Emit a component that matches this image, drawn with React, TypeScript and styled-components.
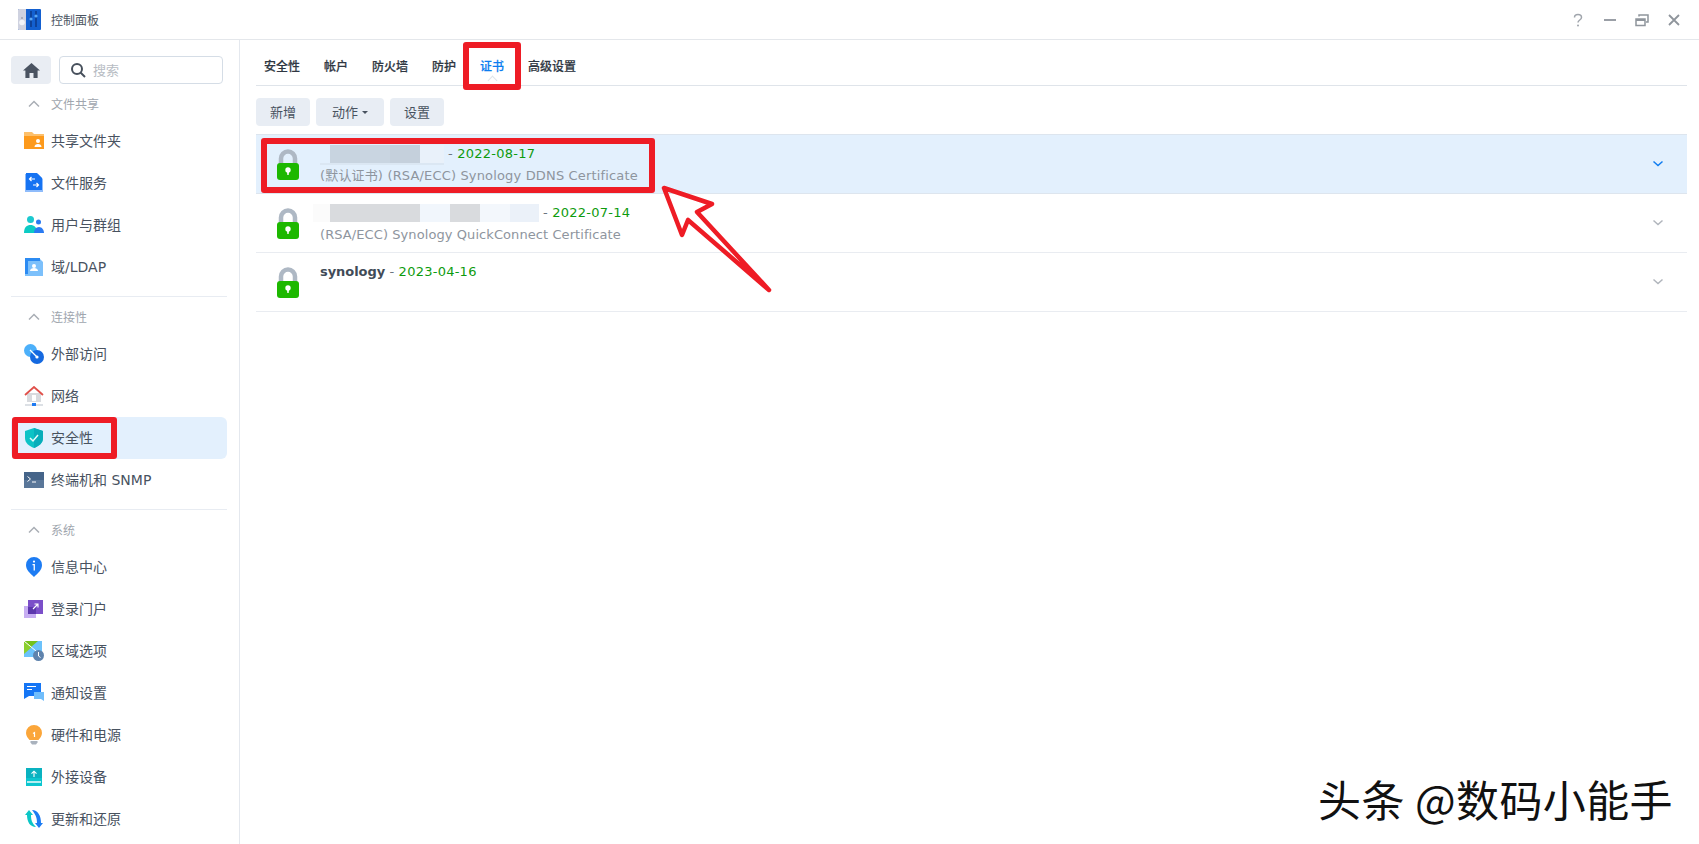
import React from "react";
import styled, { createGlobalStyle } from "styled-components";

const FONT = `"DejaVu Sans", "Noto Sans CJK SC", sans-serif`;

const Global = createGlobalStyle`
  html, body { margin: 0; padding: 0; background: #fff; }
  body { font-family: ${FONT}; overflow: hidden; }
  * { box-sizing: border-box; }
`;

const Window = styled.div`
  position: relative;
  width: 1699px;
  height: 844px;
  display: flex;
  flex-direction: column;
  overflow: hidden;
  background: #fff;
`;
const TitleBar = styled.header`
  height: 40px;
  flex: none;
  display: flex;
  align-items: center;
  padding: 0 17px 0 17px;
  border-bottom: 1px solid #e4e7eb;
`;
const AppTitle = styled.span`
  margin-left: 10px;
  font-size: 12px;
  color: #4a5461;
`;
const WinControls = styled.div`
  margin-left: auto;
  display: flex;
  align-items: center;
  gap: 16px;
`;
const WinButton = styled.svg`
  width: 16px;
  height: 16px;
  display: block;
`;
const Body = styled.div`
  flex: 1;
  display: flex;
  min-height: 0;
`;
const Sidebar = styled.nav`
  width: 240px;
  flex: none;
  padding: 16px 12px 0 11px;
  border-right: 1px solid #e4e8ee;
`;
const SearchRow = styled.div`
  display: flex;
  gap: 8px;
  height: 28px;
`;
const HomeButton = styled.button`
  width: 40px;
  height: 28px;
  padding: 0;
  border: 0;
  border-radius: 4px;
  background: #e9edf3;
  display: flex;
  align-items: center;
  justify-content: center;
`;
const SearchBox = styled.div`
  width: 164px;
  height: 28px;
  border: 1px solid #d5dde6;
  border-radius: 4px;
  display: flex;
  align-items: center;
  gap: 7px;
  padding: 0 0 1px 10px;
  font-size: 13px;
  color: #b7bcc3;
`;
const SectionHeader = styled.div`
  height: 33px;
  padding-left: 17px;
  display: flex;
  align-items: center;
  gap: 11px;
  font-size: 12px;
  color: #a0a6ae;
  margin-top: 3px;
`;
const Divider = styled.hr`
  height: 1px;
  border: 0;
  margin: 8px 0 0;
  background: #e8ecf2;
`;
const NavItem = styled.div<{ $active?: boolean }>`
  height: 42px;
  display: flex;
  align-items: center;
  gap: 7px;
  padding-left: 13px;
  font-size: 14px;
  color: #48525f;
  border-radius: 6px;
  background: ${(p) => (p.$active ? "#e3f0fd" : "transparent")};
`;
const NavLabel = styled.span`
  padding-bottom: 3px;
`;
const NavIcon = styled.svg`
  width: 20px;
  height: 20px;
  flex: none;
  display: block;
`;
const Main = styled.main`
  flex: 1;
  min-width: 0;
  padding: 0 12px 0 16px;
`;
const Tabs = styled.div`
  height: 46px;
  display: flex;
  align-items: center;
  gap: 24px;
  padding: 5px 0 0 8px;
  border-bottom: 1px solid #dfe4ea;
`;
const Tab = styled.div<{ $active?: boolean }>`
  position: relative;
  font-size: 12px;
  font-weight: 500;
  color: ${(p) => (p.$active ? "#0b7df0" : "#2f3742")};
  -webkit-text-stroke: 0.2px currentColor;
`;
const TabCaret = styled.i`
  position: absolute;
  left: 50%;
  top: 20px;
  width: 7px;
  height: 7px;
  margin-left: -3.5px;
  background: #fff;
  border-left: 1px solid #dfe4ea;
  border-top: 1px solid #dfe4ea;
  transform: rotate(45deg);
`;
const Toolbar = styled.div`
  display: flex;
  gap: 6px;
  padding-top: 12px;
  height: 48px;
`;
const ToolButton = styled.button<{ $w: number }>`
  width: ${(p) => p.$w}px;
  height: 28px;
  border: 0;
  border-radius: 4px;
  background: #e8edf4;
  color: #48525f;
  font-family: ${FONT};
  font-size: 13px;
  padding: 0 0 2px;
  display: flex;
  align-items: center;
  justify-content: center;
  gap: 4px;
`;
const CaretDown = styled.i`
  width: 0;
  height: 0;
  margin-top: 2px;
  border-left: 3px solid transparent;
  border-right: 3px solid transparent;
  border-top: 3px solid #48525f;
`;
const List = styled.div`
  border-top: 1px solid #dde5ee;
`;
const Row = styled.div<{ $active?: boolean }>`
  height: 59px;
  display: flex;
  align-items: flex-start;
  padding: 14px 0 0 20px;
  background: ${(p) => (p.$active ? "#e3f0fd" : "#fff")};
  border-bottom: 1px solid ${(p) => (p.$active ? "#dde5ee" : "#e9ecf1")};
`;
const LockIcon = styled.svg`
  width: 24px;
  height: 31px;
  flex: none;
  display: block;
`;
const RowText = styled.div`
  margin-left: 20px;
  margin-top: -5px;
  flex: 1;
  min-width: 0;
`;
const NameLine = styled.div`
  display: flex;
  align-items: center;
  height: 19px;
  font-size: 13px;
  letter-spacing: 0.16px;
  color: #6c7580;
  white-space: pre;
`;
const CertName = styled.span`
  font-weight: 700;
  letter-spacing: -0.05px;
  color: #414b57;
`;
const CertDate = styled.span`
  letter-spacing: 0.25px;
  color: #0e9b0e;
`;
const SubLine = styled.div<{ $tracking: number }>`
  margin-top: 3px;
  font-size: 13px;
  line-height: 19px;
  letter-spacing: ${(p) => p.$tracking}px;
  color: #8e959e;
`;
const Mosaic = styled.div<{ $shift: number }>`
  position: relative;
  display: flex;
  height: 18px;
  margin: 0 4px 0 ${(p) => p.$shift}px;
`;
const MosaicBlock = styled.i<{ $w: number; $c: string }>`
  display: block;
  width: ${(p) => p.$w}px;
  height: 100%;
  background: ${(p) => p.$c};
`;
const MosaicStrip = styled.i`
  position: absolute;
  left: -10px;
  right: 0;
  top: 18px;
  height: 2px;
  background: #dbe7f3;
`;
const Chevron = styled.svg`
  width: 12px;
  height: 8px;
  flex: none;
  margin: 11px 23px 0 0;
`;
const RedBox = styled.div<{ $l: number; $t: number; $w: number; $h: number }>`
  position: absolute;
  left: ${(p) => p.$l}px;
  top: ${(p) => p.$t}px;
  width: ${(p) => p.$w}px;
  height: ${(p) => p.$h}px;
  border: 6px solid #ee1c25;
  border-radius: 3px;
  pointer-events: none;
`;
const Arrow = styled.svg`
  position: absolute;
  left: 650px;
  top: 175px;
  width: 130px;
  height: 125px;
  pointer-events: none;
`;
const Watermark = styled.div`
  position: absolute;
  right: 26px;
  top: 769px;
  font-family: "Noto Sans CJK SC", sans-serif;
  font-size: 43px;
  line-height: 58px;
  color: #111;
  white-space: pre;
  letter-spacing: 0.4px;
`;

const Folder = () => (
  <NavIcon viewBox="0 0 20 20">
    <path d="M0 1h8l2 2h10v3H0z" fill="#fdc06b" />
    <path d="M0 5h20v13H0z" fill="#fd9a1c" />
    <circle cx="14" cy="10" r="2" fill="#fff" />
    <path d="M10.500 16c0-2 1.500-3 3.500-3s3.500 1 3.500 3z" fill="#fff" />
  </NavIcon>
);
const FileSvc = () => (
  <NavIcon viewBox="0 0 20 20">
    <path d="M1 1h13l5 5v13H1z" fill="#8fbcfb" />
    <path d="M2 0h11l5 5v12H2z" fill="#1673f2" />
    <path d="M11 6H5.500m2-2-2 2 2 2M9 12h5.500m-2-2 2 2-2 2" stroke="#fff" strokeWidth="1.200" fill="none" />
  </NavIcon>
);
const Users = () => (
  <NavIcon viewBox="0 0 20 20">
    <circle cx="6.500" cy="4.500" r="3.500" fill="#1cc9cf" />
    <path d="M0 18c0-6 3-8 6.500-8S13 12 13 18z" fill="#0ccbc4" />
    <circle cx="14.500" cy="7" r="2.500" fill="#2a7bf2" />
    <path d="M10 18c0-3 2-6 5-6s5 3 5 6z" fill="#2a7bf2" />
  </NavIcon>
);
const Ldap = () => (
  <NavIcon viewBox="0 0 20 20">
    <path d="M1 1h14l4 4v14H1z" fill="#7cc0fb" />
    <path d="M1 1h15v3H4v13H1z" fill="#2c8bf2" />
    <circle cx="10" cy="9" r="2" fill="#fff" />
    <path d="M6 14c0-2 2-3 4-3s4 1 4 3z" fill="#fff" />
  </NavIcon>
);
const External = () => (
  <NavIcon viewBox="0 0 20 20">
    <circle cx="6.500" cy="6.500" r="6.500" fill="#4cb0fa" />
    <circle cx="13" cy="13" r="7" fill="#1569e0" />
    <path d="M6 6l7 7" stroke="#fff" strokeWidth="1.200" />
    <circle cx="13" cy="13" r="1.600" fill="#fff" />
  </NavIcon>
);
const Network = () => (
  <NavIcon viewBox="0 0 20 20">
    <path d="M3 7h14v9H3z" fill="#d8dade" />
    <path d="M8 9h4v6H8z" fill="#fff" />
    <path d="M1 9l9-8 9 8" fill="none" stroke="#e0504a" strokeWidth="1.800" />
    <path d="M1 19h18" stroke="#c5ccd4" strokeWidth="1.200" />
    <path d="M8 17h4v3H8z" fill="#1e7af2" />
  </NavIcon>
);
const Shield = () => (
  <NavIcon viewBox="0 0 20 20">
    <path d="M10 0l9 3v7c0 5-4 8-9 10-5-2-9-5-9-10V3z" fill="#0cc3c6" />
    <path d="M10 0l9 3v7c0 5-4 8-9 10z" fill="#08adba" />
    <path d="M6 10l3 3 5-6" stroke="#e8fbfb" strokeWidth="1.500" fill="none" />
  </NavIcon>
);
const Terminal = () => (
  <NavIcon viewBox="0 0 20 20">
    <path d="M0 2h20v16H0z" fill="#5a7799" />
    <path d="M0 2h20v8H0z" fill="#456489" />
    <path d="M3.500 6.500l3 2.500-3 2.500M8 12h4" stroke="#fff" strokeWidth="1" fill="none" />
  </NavIcon>
);
const Info = () => (
  <NavIcon viewBox="0 0 20 20">
    <path d="M10 0a8 8 0 0 1 8 8c0 5-4 8-8 12-4-4-8-7-8-12a8 8 0 0 1 8-8z" fill="#1d7cf3" />
    <circle cx="10" cy="4.600" r="1.100" fill="#fff" />
    <path d="M8.500 7h2.400v6.500H9.600V8.200H8.500z" fill="#fff" />
  </NavIcon>
);
const Portal = () => (
  <NavIcon viewBox="0 0 20 20">
    <path d="M0 7h12v12H0z" fill="#c7aef2" />
    <path d="M4 1h15v14H4z" fill="#7b4fc9" />
    <path d="M4 8h8v7H4z" fill="#5c37ad" />
    <path d="M9 10l5-5m-3.500 0H14v3.500" stroke="#fff" strokeWidth="1.100" fill="none" />
  </NavIcon>
);
const Region = () => (
  <NavIcon viewBox="0 0 20 20">
    <path d="M0 0h18v16H0z" fill="#6cc2fb" />
    <path d="M0 0h14L7 6z" fill="#76c11a" />
    <path d="M0 0v13l8-7z" fill="#8bcf2e" />
    <path d="M0 0l18 15" stroke="#fff" strokeWidth="1" />
    <circle cx="14.500" cy="14.500" r="5.500" fill="#5f83ad" />
    <path d="M14.500 11v4l2 1.500" stroke="#fff" strokeWidth="1" fill="none" />
  </NavIcon>
);
const Notify = () => (
  <NavIcon viewBox="0 0 20 20">
    <path d="M0 0h17v13H5l-5 3z" fill="#1576f5" />
    <path d="M3 3.500h9M3 6.500h5" stroke="#fff" strokeWidth="1" />
    <path d="M10 9h10v9l-3-2h-7z" fill="#70bdfb" />
  </NavIcon>
);
const Bulb = () => (
  <NavIcon viewBox="0 0 20 20">
    <path d="M10 0a8 8 0 0 1 8 8c0 3-2 5-3.500 7h-9C4 13 2 11 2 8a8 8 0 0 1 8-8z" fill="#fba63a" />
    <path d="M6.500 16h7v1.500l-1.500 2h-4l-1.500-2z" fill="#a9b2bd" />
    <path d="M9 8.500l1.500-1v4.500" stroke="#fff" strokeWidth="1.200" fill="none" />
  </NavIcon>
);
const Usb = () => (
  <NavIcon viewBox="0 0 20 20">
    <path d="M2 1h16v18H2z" fill="#0cc6cf" />
    <path d="M2 1h16v10H2z" fill="#0ab2c0" />
    <path d="M10 10V4.500m-2.500 2.200L10 4.200l2.500 2.500" stroke="#fff" strokeWidth="1.100" fill="none" />
    <path d="M3 15h14" stroke="#fff" strokeWidth="1.400" />
  </NavIcon>
);
const Update = () => (
  <NavIcon viewBox="0 0 20 20">
    <path d="M3 6H1l4-5 4 5H7c0 5 1 8 5 12-6 0-9-5-9-12z" fill="#0cc6c6" />
    <path d="M17 14h2l-4 5-4-5h2c0-5-1-8-5-13 6 0 9 6 9 13z" fill="#1d7cf3" />
  </NavIcon>
);

const Lock = () => (
  <LockIcon viewBox="0 0 24 31">
    <path d="M5 15V9.500a7 7 0 0 1 14 0V15" fill="none" stroke="#aeb8c4" strokeWidth="4.500" />
    <rect x="1" y="14" width="22" height="17" rx="3" fill="#1db800" />
    <circle cx="12" cy="21" r="2.700" fill="#fff" />
    <path d="M11 22h2l-.3 4h-1.400z" fill="#fff" />
  </LockIcon>
);

const sections: { title: string; items: [string, React.FC][]; divider?: boolean }[] = [
  {
    title: "文件共享",
    items: [
      ["共享文件夹", Folder],
      ["文件服务", FileSvc],
      ["用户与群组", Users],
      ["域/LDAP", Ldap],
    ],
  },
  {
    title: "连接性",
    divider: true,
    items: [
      ["外部访问", External],
      ["网络", Network],
      ["安全性", Shield],
      ["终端机和 SNMP", Terminal],
    ],
  },
  {
    title: "系统",
    divider: true,
    items: [
      ["信息中心", Info],
      ["登录门户", Portal],
      ["区域选项", Region],
      ["通知设置", Notify],
      ["硬件和电源", Bulb],
      ["外接设备", Usb],
      ["更新和还原", Update],
    ],
  },
];

const tabs = ["安全性", "帐户", "防火墙", "防护", "证书", "高级设置"];

const row1: [number, string][] = [
  [30, "#c8d4e0"],
  [30, "#c9d5e1"],
  [30, "#c5d0dc"],
  [24, "#e9f1fa"],
];
const row2: [number, string][] = [
  [17, "#fbfbfb"],
  [90, "#d9dbde"],
  [30, "#f1f6fc"],
  [30, "#d9dbde"],
  [30, "#f3f7fc"],
  [29, "#ebf1f9"],
];

const Chev = ({ active }: { active?: boolean }) => (
  <Chevron viewBox="0 0 12 8">
    <path d="M1.500 1.500L6 5.500l4.500-4" fill="none" stroke={active ? "#0f7cf0" : "#b0b5bc"} strokeWidth="1.500" />
  </Chevron>
);

export default function App() {
  return (
    <Window>
      <Global />
      <TitleBar>
        <svg width="24" height="24" viewBox="0 0 24 24">
          <rect x="1" y="1" width="23" height="21" rx="1" fill="#1360d0" />
          <path d="M1 2a1 1 0 0 1 1-1h7v21H2a1 1 0 0 1-1-1z" fill="#cfd2e0" />
          <circle cx="5" cy="14.500" r="2.800" fill="#f3f4f8" />
          <circle cx="5" cy="10" r="0.700" fill="#6a7080" />
          <path d="M14 3v16M19 3v16" stroke="#0b2f78" strokeWidth="1.200" />
          <circle cx="14" cy="11" r="1.600" fill="#5aa8f5" />
          <circle cx="19" cy="8" r="1.600" fill="#5aa8f5" />
        </svg>
        <AppTitle>控制面板</AppTitle>
        <WinControls>
          <WinButton viewBox="0 0 16 16">
            <path d="M4.500 5.500C4.500 3.500 6 2.500 8 2.500s3.500 1.200 3.500 3c0 2.500-3.500 2.500-3.500 5" fill="none" stroke="#a0a5ac" strokeWidth="1.500" />
            <circle cx="8" cy="13.500" r="1" fill="#a0a5ac" />
          </WinButton>
          <WinButton viewBox="0 0 16 16">
            <path d="M2 8h12" stroke="#8f959c" strokeWidth="1.800" />
          </WinButton>
          <WinButton viewBox="0 0 16 16">
            <path d="M5 4.500V3h9v7h-2M2 7h9v6.500H2z" fill="none" stroke="#8f959c" strokeWidth="1.500" />
            <path d="M2 7h9v2H2z" fill="#8f959c" />
          </WinButton>
          <WinButton viewBox="0 0 16 16">
            <path d="M3 3l10 10M13 3L3 13" stroke="#8f959c" strokeWidth="1.800" />
          </WinButton>
        </WinControls>
      </TitleBar>
      <Body>
        <Sidebar>
          <SearchRow>
            <HomeButton aria-label="home">
              <svg width="17" height="15" viewBox="0 0 17 15">
                <path d="M8.500 0L17 7.500h-2.400V15H10.500v-5h-4v5H2.400V7.500H0z" fill="#4a5361" />
              </svg>
            </HomeButton>
            <SearchBox>
              <svg width="16" height="16" viewBox="0 0 16 16">
                <circle cx="7" cy="7" r="5" fill="none" stroke="#47505c" strokeWidth="2" />
                <path d="M10.500 10.500L15 15" stroke="#47505c" strokeWidth="2" />
              </svg>
              搜索
            </SearchBox>
          </SearchRow>
          {sections.map((s) => (
            <section key={s.title}>
              {s.divider && <Divider />}
              <SectionHeader>
                <svg width="12" height="8" viewBox="0 0 12 8">
                  <path d="M1 6.500L6 1.500l5 5" fill="none" stroke="#a9aeb5" strokeWidth="1.500" />
                </svg>
                {s.title}
              </SectionHeader>
              {s.items.map(([label, Icon]) => (
                <NavItem key={label} $active={label === "安全性"}>
                  <Icon />
                  <NavLabel>{label}</NavLabel>
                </NavItem>
              ))}
            </section>
          ))}
        </Sidebar>
        <Main>
          <Tabs>
            {tabs.map((t) => (
              <Tab key={t} $active={t === "证书"}>
                {t}
                {t === "证书" && <TabCaret />}
              </Tab>
            ))}
          </Tabs>
          <Toolbar>
            <ToolButton $w={54}>新增</ToolButton>
            <ToolButton $w={68}>
              动作
              <CaretDown />
            </ToolButton>
            <ToolButton $w={54}>设置</ToolButton>
          </Toolbar>
          <List>
            <Row $active>
              <Lock />
              <RowText>
                <NameLine>
                  <Mosaic $shift={10}>
                    {row1.map(([w, c], i) => (
                      <MosaicBlock key={i} $w={w} $c={c} />
                    ))}
                    <MosaicStrip />
                  </Mosaic>
                  {"- "}
                  <CertDate>2022-08-17</CertDate>
                </NameLine>
                <SubLine $tracking={0.16}>(默认证书) (RSA/ECC) Synology DDNS Certificate</SubLine>
              </RowText>
              <Chev active />
            </Row>
            <Row>
              <Lock />
              <RowText>
                <NameLine>
                  <Mosaic $shift={-7}>
                    {row2.map(([w, c], i) => (
                      <MosaicBlock key={i} $w={w} $c={c} />
                    ))}
                  </Mosaic>
                  {"- "}
                  <CertDate>2022-07-14</CertDate>
                </NameLine>
                <SubLine $tracking={0.08}>(RSA/ECC) Synology QuickConnect Certificate</SubLine>
              </RowText>
              <Chev />
            </Row>
            <Row>
              <Lock />
              <RowText>
                <NameLine>
                  <CertName>synology</CertName>
                  {" - "}
                  <CertDate>2023-04-16</CertDate>
                </NameLine>
              </RowText>
              <Chev />
            </Row>
          </List>
        </Main>
      </Body>
      <RedBox $l={12} $t={417} $w={105} $h={42} />
      <RedBox $l={463} $t={42} $w={58} $h={48} />
      <RedBox $l={261} $t={138} $w={394} $h={55} />
      <Arrow viewBox="650 175 130 125">
        <path d="M664 188L712 204 697 212 769 290 688 220 682 235z" fill="none" stroke="#ee1c25" strokeWidth="4.500" strokeLinejoin="round" />
      </Arrow>
      <Watermark>头条 @数码小能手</Watermark>
    </Window>
  );
}
